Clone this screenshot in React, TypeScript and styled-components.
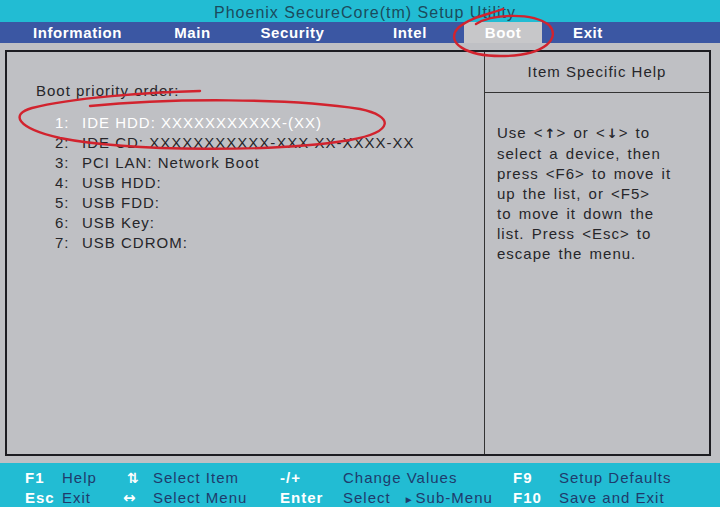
import React from "react";
import styled, { createGlobalStyle } from "styled-components";

const GlobalStyle = createGlobalStyle`
	html, body {
		margin: 0;
		padding: 0;
		background: #bfc0c4;
	}
	* {
		box-sizing: border-box;
	}
`;

const Screen = styled.div`
	position: relative;
	width: 720px;
	height: 507px;
	display: flex;
	flex-direction: column;
	background: #bfc0c4;
	font-family: "Liberation Sans", Arial, sans-serif;
	overflow: hidden;
`;

const TitleBar = styled.div`
	height: 22px;
	background: #22bcd3;
	color: #1b4b5d;
	font-size: 16px;
	letter-spacing: 1px;
	line-height: 25px;
	text-align: center;
	padding-left: 10px;
`;

const MenuBar = styled.div`
	height: 21px;
	background: #3b57a3;
	display: flex;
	padding-left: 20px;
`;

const MenuItem = styled.div<{ $w: number; $ml?: number; $active?: boolean }>`
	width: ${(p) => p.$w}px;
	margin-left: ${(p) => p.$ml ?? 0}px;
	text-align: center;
	color: #fff;
	font-size: 15px;
	font-weight: bold;
	letter-spacing: 0.6px;
	line-height: 22px;
	background: ${(p) => (p.$active ? "#c7c7c9" : "transparent")};
`;

const Body = styled.div`
	flex: 1;
	padding: 7px 9px 7px 5px;
`;

const Frame = styled.div`
	height: 100%;
	border: 2px solid #1d1d22;
	display: grid;
	grid-template-columns: 478px 1fr;
`;

const LeftPanel = styled.div`
	border-right: 1px solid #333;
	padding: 29px 0 0 29px;
	color: #26262a;
	font-size: 15px;
	letter-spacing: 1px;
	line-height: 20px;
`;

const List = styled.div`
	margin-top: 12px;
	padding-left: 19px;
`;

const Row = styled.div<{ $selected?: boolean }>`
	display: flex;
	color: ${(p) => (p.$selected ? "#ffffff" : "#26262a")};
`;

const Num = styled.span`
	width: 27px;
`;

const RightPanel = styled.div`
	display: flex;
	flex-direction: column;
	color: #26262a;
	font-size: 15px;
	letter-spacing: 1px;
	line-height: 20px;
`;

const HelpHeader = styled.div`
	height: 41px;
	border-bottom: 1px solid #333;
	display: flex;
	align-items: center;
	justify-content: center;
`;

const HelpText = styled.div`
	padding: 30px 0 0 12px;
	word-spacing: 2px;
`;

const Arrow = styled.b`
	font-family: "DejaVu Sans", sans-serif;
	font-size: 13px;
	letter-spacing: 0;
	margin: 0 1px;
`;

const Footer = styled.div`
	height: 44px;
	background: #22bcd3;
	padding: 5px 0 0 25px;
	display: grid;
	grid-template-columns: 37px 61px 30px 127px 63px 170px 46px 1fr;
	grid-auto-rows: 20px;
	font-size: 15px;
	letter-spacing: 1px;
	line-height: 20px;
`;

const Key = styled.span`
	color: #fff;
	font-weight: bold;
`;

const Desc = styled.span`
	color: #1f3b6c;
	white-space: nowrap;
`;

const Glyph = styled.span<{ $wide?: boolean }>`
	color: #fff;
	font-family: "DejaVu Sans", sans-serif;
	font-weight: bold;
	font-size: ${(p) => (p.$wide ? 15 : 14)}px;
	letter-spacing: 0;
	padding-left: ${(p) => (p.$wide ? 0 : 4)}px;
`;

const Pointer = styled.span`
	font-size: 10px;
	margin-left: 13px;
	margin-right: 1px;
`;

const Ink = styled.svg`
	position: absolute;
	left: 0;
	top: 0;
	pointer-events: none;
`;

const items = [
	"IDE HDD: XXXXXXXXXXX-(XX)",
	"IDE CD: XXXXXXXXXXX-XXX XX-XXXX-XX",
	"PCI LAN: Network Boot",
	"USB HDD:",
	"USB FDD:",
	"USB Key:",
	"USB CDROM:",
];

const App: React.FC = () => {
	return (
		<React.Fragment>
			<GlobalStyle />
			<Screen>
				<TitleBar>Phoenix SecureCore(tm) Setup Utility</TitleBar>
				<MenuBar>
					<MenuItem $w={115}>Information</MenuItem>
					<MenuItem $w={115}>Main</MenuItem>
					<MenuItem $w={85}>Security</MenuItem>
					<MenuItem $w={70} $ml={40}>
						Intel
					</MenuItem>
					<MenuItem $w={78} $ml={19} $active>
						Boot
					</MenuItem>
					<MenuItem $w={92}>Exit</MenuItem>
				</MenuBar>
				<Body>
					<Frame>
						<LeftPanel>
							Boot priority order:
							<List>
								{items.map((item, i) => (
									<Row key={i} $selected={i === 0}>
										<Num>{i + 1}:</Num>
										{item}
									</Row>
								))}
							</List>
						</LeftPanel>
						<RightPanel>
							<HelpHeader>Item Specific Help</HelpHeader>
							<HelpText>
								Use &lt;<Arrow>↑</Arrow>&gt; or &lt;<Arrow>↓</Arrow>&gt; to
								<br />
								select a device, then
								<br />
								press &lt;F6&gt; to move it
								<br />
								up the list, or &lt;F5&gt;
								<br />
								to move it down the
								<br />
								list. Press &lt;Esc&gt; to
								<br />
								escape the menu.
							</HelpText>
						</RightPanel>
					</Frame>
				</Body>
				<Footer>
					<Key>F1</Key>
					<Desc>Help</Desc>
					<Glyph>⇅</Glyph>
					<Desc>Select Item</Desc>
					<Key>-/+</Key>
					<Desc>Change Values</Desc>
					<Key>F9</Key>
					<Desc>Setup Defaults</Desc>

					<Key>Esc</Key>
					<Desc>Exit</Desc>
					<Glyph $wide>↔</Glyph>
					<Desc>Select Menu</Desc>
					<Key>Enter</Key>
					<Desc>
						Select<Pointer>►</Pointer>Sub-Menu
					</Desc>
					<Key>F10</Key>
					<Desc>Save and Exit</Desc>
				</Footer>
				<Ink width="720" height="507" viewBox="0 0 720 507">
					<g fill="none" stroke="#d2232e" strokeWidth="2.4" strokeLinecap="round">
						<path d="M 200 91 C 150 92, 70 98, 32 108 C 10 114, 16 128, 60 138 C 130 152, 280 152, 350 140 C 395 132, 394 116, 360 109 C 290 98, 170 98, 90 106" />
						<path d="M 476 24 C 492 14, 532 12, 549 25 C 561 38, 545 55, 505 56 C 465 57, 445 42, 458 28 C 470 17, 490 14, 503 9" />
					</g>
				</Ink>
			</Screen>
		</React.Fragment>
	);
};

export default App;
